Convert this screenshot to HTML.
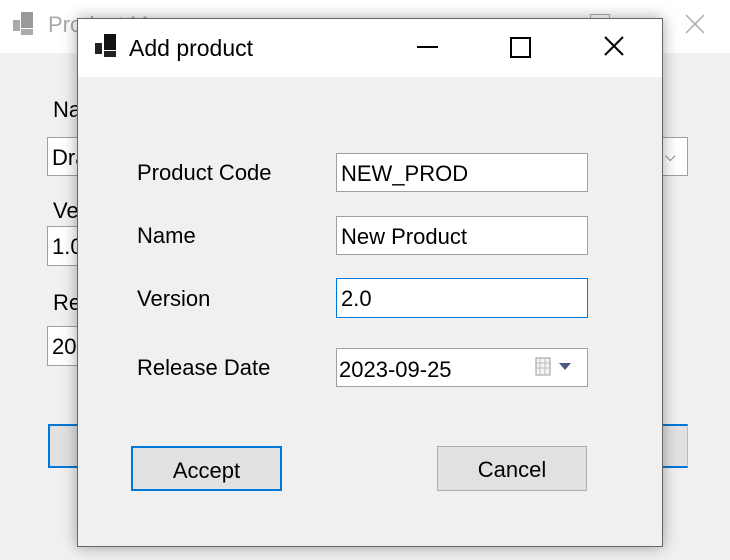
<!DOCTYPE html>
<html><head><style>
body{margin:0;width:730px;height:560px;background:#f0f0f0;position:relative;overflow:hidden;font-family:"Liberation Sans",sans-serif;color:#000}
.a{position:absolute}
.box{position:absolute;background:#fff;border:1px solid #a0a0a0;box-sizing:border-box;font-size:22px;padding-left:4px;line-height:40px}
.lbl{position:absolute;font-size:22px}
.btn{position:absolute;background:#e1e1e1;border:1px solid #adadad;box-sizing:border-box;font-size:22px;text-align:center;line-height:46px}
</style></head><body>
<div class="a" style="left:0;top:0;width:730px;height:53px;background:#fff"></div>
<svg class="a" style="left:13px;top:12px" width="28" height="24"><rect x="0" y="8" width="7" height="11" fill="#aaa"/><rect x="8" y="0" width="12" height="16" fill="#999"/><rect x="8" y="17" width="12" height="6" fill="#aaa"/></svg>
<div class="a" style="left:48px;top:12px;font-size:22px;color:#aaa">Product Manager</div>
<div class="a" style="left:590px;top:14px;width:18px;height:18px;border:1px solid #aaa"></div>
<svg class="a" style="left:685px;top:14px" width="20" height="20"><path d="M1 1L19 19M19 1L1 19" stroke="#aaa" stroke-width="1.5"/></svg>
<div class="lbl" style="left:53px;top:97px">Name</div>
<div class="box" style="left:47px;top:137px;width:641px;height:39px">Draft</div>
<div class="a" style="left:665px;top:148px;font-size:14px;color:#555">⌵</div>
<div class="lbl" style="left:53px;top:198px">Version</div>
<div class="box" style="left:47px;top:226px;width:200px;height:40px">1.0</div>
<div class="lbl" style="left:53px;top:290px">Release</div>
<div class="box" style="left:47px;top:326px;width:200px;height:40px">2023</div>
<div class="btn" style="left:48px;top:424px;width:640px;height:44px;border-color:#bbb;border-left:2px solid #0078d7;border-top:2px solid #0078d7;border-bottom:2px solid #0078d7"></div>

<div class="a" style="left:77px;top:18px;width:586px;height:529px;background:#f0f0f0;border:1px solid #666;box-sizing:border-box;box-shadow:0 0 14px rgba(0,0,0,.35)">
<div class="a" style="left:0;top:0;width:584px;height:58px;background:#fff"></div>
</div>
<svg class="a" style="left:95px;top:34px" width="28" height="24"><rect x="0" y="9" width="7" height="11" fill="#222"/><rect x="9" y="0" width="12" height="16" fill="#111"/><rect x="9" y="17" width="12" height="6" fill="#222"/></svg>
<div class="a" style="left:129px;top:35px;font-size:23px">Add product</div>
<div class="a" style="left:417px;top:46px;width:21px;height:2px;background:#000"></div>
<div class="a" style="left:510px;top:37px;width:17px;height:17px;border:2px solid #000"></div>
<svg class="a" style="left:604px;top:36px" width="20" height="20"><path d="M1 1L19 19M19 1L1 19" stroke="#000" stroke-width="2"/></svg>

<div class="lbl" style="left:137px;top:160px">Product Code</div>
<div class="box" style="left:336px;top:153px;width:252px;height:39px">NEW_PROD</div>
<div class="lbl" style="left:137px;top:223px">Name</div>
<div class="box" style="left:336px;top:216px;width:252px;height:39px">New Product</div>
<div class="lbl" style="left:137px;top:286px">Version</div>
<div class="box" style="left:336px;top:278px;width:252px;height:40px;border-color:#0078d7">2.0</div>
<div class="lbl" style="left:137px;top:355px">Release Date</div>
<div class="box" style="left:336px;top:348px;width:252px;height:39px;padding-left:2px;line-height:42px">2023-09-25</div>
<svg class="a" style="left:535px;top:357px" width="42" height="22"><rect x="1" y="1" width="14" height="17" fill="#f4f4f4" stroke="#999"/><path d="M5 1V18M10 1V18M1 6H15M1 11H15" stroke="#bbb"/><path d="M24 6H36L30 13Z" fill="#4a5a80"/></svg>
<div class="btn" style="left:131px;top:446px;width:151px;height:45px;border:2px solid #0078d7">Accept</div>
<div class="btn" style="left:437px;top:446px;width:150px;height:45px">Cancel</div>
</body></html>
